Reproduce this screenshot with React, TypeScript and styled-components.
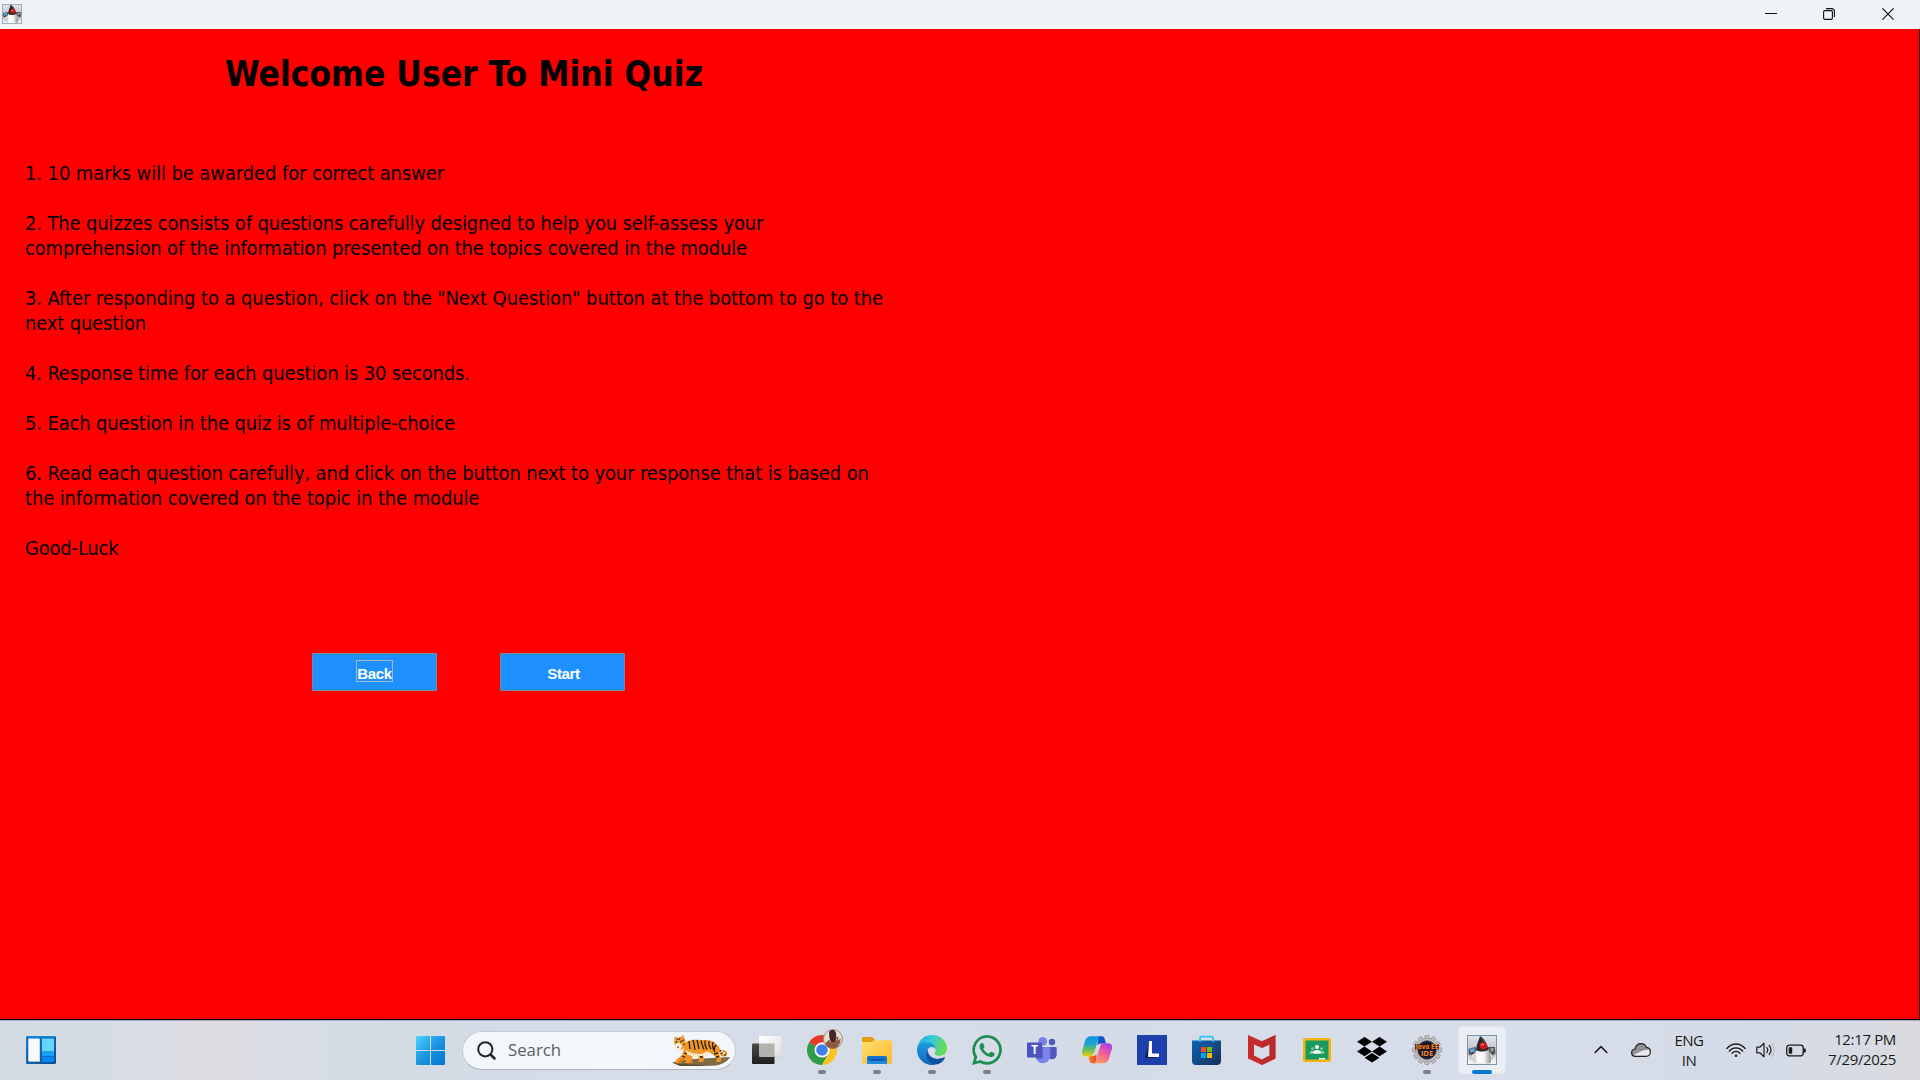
import React from "react";
import styled, { createGlobalStyle } from "styled-components";

const GlobalStyle = createGlobalStyle`
  * { box-sizing: border-box; }
  body { margin: 0; background: #ff0000; overflow: hidden; }
`;

const Desktop = styled.div`
  display: flex;
  flex-direction: column;
  width: 1920px;
  height: 1080px;
`;

/* ---------- window ---------- */

const TitleBar = styled.header`
  display: flex;
  align-items: center;
  justify-content: space-between;
  flex: 0 0 29px;
  padding: 0 3px 1px 2px;
  background: #eff3f8;
`;

const WindowControls = styled.div`
  display: flex;
`;

const WindowControl = styled.button`
  display: flex;
  align-items: center;
  justify-content: center;
  width: 58.5px;
  height: 28px;
  padding: 0;
  border: 0;
  background: none;
`;

const Frame = styled.main`
  display: flex;
  flex-direction: column;
  align-items: flex-start;
  flex: 0 0 990px;
  border-right: 1px solid #1a0000;
  background: #ff0000;
  color: #000;
`;

const Heading = styled.h1`
  margin: 24px 0 0 225px;
  height: 42px;
  font: bold 35px/42px "DejaVu Sans Condensed", Tahoma, sans-serif;
  letter-spacing: 0.03px;
  white-space: nowrap;
`;

const Rules = styled.div`
  display: flex;
  flex-direction: column;
  gap: 25px;
  margin: 66px 0 0 25px;
  font: 20px/25px "DejaVu Sans Condensed", Tahoma, sans-serif;
`;

const Rule = styled.p`
  margin: 0;
`;

const Line = styled.span<{ $tracking: number }>`
  display: block;
  white-space: nowrap;
  letter-spacing: ${(p) => p.$tracking}px;
`;

const Actions = styled.div`
  display: flex;
  gap: 63px;
  margin: 92px 0 0 312px;
`;

const ActionButton = styled.button`
  display: flex;
  align-items: center;
  justify-content: center;
  width: 125px;
  height: 38px;
  padding: 0 0 0 2px;
  border: 1px solid #7a8a99;
  background: #1e90ff;
  color: #fff;
  font: bold 15px/20px "Liberation Sans", Arial, sans-serif;
`;

const ButtonLabel = styled.span<{ $focused?: boolean }>`
  height: 22px;
  margin-top: ${(p) => (p.$focused ? "-2px" : "0")};
  margin-left: ${(p) => (p.$focused ? "-2px" : "0")};
  padding: ${(p) => (p.$focused ? "3px" : "2px")} 0 0;
  line-height: 20px;
  border: 1px solid ${(p) => (p.$focused ? "#a3b8cc" : "transparent")};
  letter-spacing: -0.35px;
`;

/* ---------- taskbar ---------- */

const Taskbar = styled.footer`
  display: flex;
  align-items: center;
  flex: 0 0 61px;
  border-top: 1px solid #000;
  box-shadow: inset 0 1px 0 #a5adb8;
  background: linear-gradient(90deg, #d4dbe5 0, #d5dce6 90px, #dedce2 220px, #d6dce6 330px, #d3dbe5 420px, #d6dde8 600px, #d5dce8 1100px, #d7dde9 1500px, #d5dbe6 1780px, #dadbe0 1920px);
  font-family: "Open Sans", "Segoe UI", sans-serif;
  color: #1b1b1b;
`;

const WidgetSlot = styled.div`
  display: flex;
  flex: 0 0 416px;
  padding-left: 26px;
`;

const SearchBox = styled.div`
  display: flex;
  align-items: center;
  width: 274px;
  height: 39px;
  margin: 0 3px 0 17px;
  padding: 0 5px 0 14px;
  border: 1px solid #c6ccd6;
  border-bottom-color: #aeb4be;
  border-radius: 20px;
  background: #f3f6fa;
`;

const SearchText = styled.span`
  flex: 1;
  margin-left: 12px;
  font-size: 16.8px;
  line-height: 24px;
  color: #5c5e62;
`;

const Apps = styled.div`
  display: flex;
`;

const AppSlot = styled.div`
  position: relative;
  display: flex;
  align-items: center;
  justify-content: center;
  width: 55px;
  height: 60px;
`;

const ActivePlate = styled.div`
  display: flex;
  align-items: center;
  justify-content: center;
  width: 48px;
  height: 48px;
  border: 1px solid #e3e7ef;
  border-radius: 5px;
  background: #ebeef5;
`;

const Indicator = styled.i<{ $active?: boolean }>`
  position: absolute;
  left: 50%;
  bottom: 6px;
  width: ${(p) => (p.$active ? 20 : 8)}px;
  height: 4px;
  border-radius: 2px;
  transform: translateX(-50%);
  background: ${(p) => (p.$active ? "#0078d4" : "#7c7f86")};
`;

const Tray = styled.div`
  display: flex;
  align-items: center;
  margin-left: auto;
  padding-right: 24px;
`;

const Language = styled.div`
  width: 34px;
  margin: 0 20px 0 21px;
  font-size: 15px;
  line-height: 20px;
  letter-spacing: -0.5px;
  text-align: center;
`;

const StatusIcons = styled.div`
  display: flex;
  align-items: center;
  gap: 10px;
`;

const Clock = styled.div`
  width: 70px;
  margin: -2px 0 0 20px;
  font-size: 15px;
  line-height: 20px;
  letter-spacing: -0.35px;
  text-align: right;
  white-space: nowrap;
`;

/* ---------- drawings ---------- */

const Svg = styled.svg`
  display: block;
  flex: none;
`;

const Duke = ({ size }: { size: number }) => (
  <Svg width={size} height={size} viewBox="0 0 30 30">
    <defs>
      <linearGradient id="dukeBg" x2="0" y2="1">
        <stop offset="0" stopColor="#dfe5ea" />
        <stop offset=".45" stopColor="#c3c9cd" />
        <stop offset=".6" stopColor="#9a9d9d" />
        <stop offset=".75" stopColor="#e1e1e0" />
        <stop offset="1" stopColor="#f5f6f7" />
      </linearGradient>
      <linearGradient id="dukeBody" x2="1">
        <stop offset="0" stopColor="#bfbfbd" />
        <stop offset=".25" stopColor="#fff" />
        <stop offset=".6" stopColor="#f4f4f2" />
        <stop offset="1" stopColor="#8f8f8d" />
      </linearGradient>
    </defs>
    <rect x=".5" y=".5" width="29" height="29" fill="url(#dukeBg)" stroke="#7796ad" />
    <path d="M1.500 14l7-2 1 6-7 2z" fill="#3d4145" />
    <path d="M2.500 14.500l5-1.500.6 3.500-5 1.300z" fill="#65a9da" />
    <path d="M21 12h7v6l-3 3-4-2z" fill="#4c4f52" />
    <path d="M23.500 13h3.500l-1 3.500h-2.500z" fill="#9b9fa2" />
    <path d="M9.500 16C7 19 3.500 20 3 23c1 2 4 1 6-1zM21 16c2 2 6 4 5 7-1 1-3 0-5-1z" fill="#dededc" stroke="#777" strokeWidth=".5" />
    <path d="M9.500 13C8.500 19 6 23 6.500 27c1.500 2.300 4 1.800 6-.5 2 1 4 1 5.500.5 1.500 2.300 4.500 2 6 .3.500-5-1-10-3-14.300z" fill="url(#dukeBody)" />
    <path d="M13 1.200C12 5 9.500 9 9 15c3.500 2.200 9 2 12.500-.5C20.500 9 17 3 13 1.200z" fill="#29292b" />
    <path d="M14 3c3 2 5 6 6 10" fill="none" stroke="#77777a" strokeWidth=".7" />
    <circle cx="16.300" cy="10.800" r="3.600" fill="#d4131d" />
    <ellipse cx="15.500" cy="9.600" rx="1.600" ry="1" fill="#f8736f" />
  </Svg>
);

const WidgetsIcon = () => (
  <Svg width="30" height="28" viewBox="0 0 30 28">
    <defs>
      <linearGradient id="wg" x2="1" y2="1">
        <stop offset="0" stopColor="#0a7fd6" />
        <stop offset="1" stopColor="#12498f" />
      </linearGradient>
    </defs>
    <rect width="30" height="28" rx="1.200" fill="url(#wg)" />
    <path d="M1 .7h28" stroke="#1d8ee0" />
    <rect x="2.300" y="2.500" width="11.500" height="23" rx="1" fill="#f8f8f9" />
    <rect x="3" y="25" width="11" height="1" fill="#9fb2c6" />
    <rect x="16" y="2.500" width="12" height="12.500" fill="#64d6fb" />
    <rect x="16" y="15" width="12" height="5" fill="#1b9df5" />
    <rect x="16" y="20.500" width="12" height="5.500" fill="#0685ec" />
  </Svg>
);

const StartIcon = () => (
  <Svg width="29" height="29" viewBox="0 0 29 29">
    <defs>
      <linearGradient id="st" x2="29" y2="29" gradientUnits="userSpaceOnUse">
        <stop offset="0" stopColor="#4ed3fd" />
        <stop offset=".5" stopColor="#1a94e0" />
        <stop offset="1" stopColor="#0074d4" />
      </linearGradient>
    </defs>
    <path d="M.8 0H14v14H0V.8zM15 0h13.200l.8.8V14H15zM0 15h14v14H.8l-.8-.8zM15 15h14v13.200l-.8.8H15z" fill="url(#st)" />
  </Svg>
);

const SearchIcon = () => (
  <Svg width="19" height="19" viewBox="0 0 19 19" fill="none" stroke="#252628" strokeLinecap="round">
    <circle cx="8.300" cy="8.300" r="7.100" strokeWidth="2" />
    <path d="M13.500 13.500l4 4" strokeWidth="2.500" />
  </Svg>
);

const Tiger = () => (
  <Svg width="58" height="33" viewBox="0 0 58 33">
    <path d="M0 28.500c8-2 14-3 22-3.500 12-.6 25-1.500 36-2-2 4-8 7.500-14 8.500H8z" fill="#7d6b45" />
    <path d="M0 28.500l8 3.500h36c-12-1-30-1-44-3.500z" fill="#5a4b30" />
    <path d="M46 13c2 5 3 9 6 8.500s2.500-4-.5-4.500" fill="none" stroke="#e58a1f" strokeWidth="1.900" strokeLinecap="round" />
    <path d="M13 17l-3 7-6 4 1 1.500h4l6-6zM24 19l-4 4 1 6.500h-4l1-8z" fill="#d9771b" />
    <path d="M14 8c6-3.500 12-2 18-2 7-.5 12 2 14.500 7 1.500 4 0 6 1 8l2 4-1 3h-4.500l1-3-4-4.500L36 18l-5 3 1 5-1 2h-5l1-2-1-5-6 1-1 5-1 2h-5l1-2-1-5-5 4-2 3H3l1-3 6-5 2-6z" fill="#ef9628" />
    <path d="M14 16c4 3 10 4 15 4l7-3-1 4-5 1-9 .5-6-2z" fill="#fbe6c4" />
    <path d="M2.500 4L3 2.500 6 4l3-.7L11 .5l1.500 3.500c1.500 3 2 7 0 10L9 16l-5-2-2-5z" fill="#f0992f" />
    <path d="M2.500 11l4-2.500 4 3-2 4-4.500-1z" fill="#fff0da" />
    <circle cx="4.500" cy="8" r="1" fill="#3b464b" />
    <circle cx="9" cy="7.500" r="1" fill="#3b464b" />
    <path d="M5 13l2 .3M5 4l1 2M8 3.500L7 6M12 6l-2 1M13 10l-2 1" stroke="#2e1d10" strokeWidth=".9" fill="none" />
    <path d="M17 7l1 8M21 6l1 4 1 6M25 6l1 4 1 5M29 6.500l1 4 2 5M33 6.500l0 4 2 5M37 7l0 4 2 4M41 8l-.5 3 1 5M44.500 11l-2 2 0 5M12 19l3 1M10 22l3 1M28 23h3M42 20l4-1M44 23l3-.5M48 17l1.500-.8M49.500 20l1-1.500M53.500 21.500l-.7-1.200" stroke="#2e1d10" strokeWidth="1.300" fill="none" />
  </Svg>
);

const TaskViewIcon = () => (
  <Svg width="30" height="30" viewBox="0 0 30 30">
    <defs>
      <linearGradient id="tvd" x2="0" y2="1">
        <stop offset="0" stopColor="#4a4b49" />
        <stop offset="1" stopColor="#1e1e1d" />
      </linearGradient>
      <linearGradient id="tvl" x2="1" y2="1">
        <stop offset="0" stopColor="#fff" />
        <stop offset="1" stopColor="#dededf" />
      </linearGradient>
    </defs>
    <rect x="0" y="8.500" width="22.500" height="20.500" rx="1" fill="url(#tvd)" />
    <rect x="7" y="1" width="22.500" height="20.500" rx="1" fill="url(#tvl)" />
    <path d="M7 8.500h15.500v13H7z" fill="#b1b1b1" />
    <path d="M8 21.200h21" stroke="#c5c7ca" strokeWidth=".7" />
  </Svg>
);

const ChromeIcon = () => (
  <Svg width="42" height="42" viewBox="-6 -6 42 42">
    <path d="M15 15L2 7.500A15 15 0 0 1 28 7.500H15z" fill="#e33b2e" />
    <path d="M15 15L2 7.500A15 15 0 0 0 15 30l6.500-11.200z" fill="#2f9c4b" />
    <path d="M15 7.500h13A15 15 0 0 1 15 30l6.500-11.200z" fill="#fcc31f" />
    <circle cx="15" cy="15" r="7.500" fill="#fff" />
    <circle cx="15" cy="15" r="5.800" fill="#3f7fee" />
    <circle cx="26" cy="4" r="9.500" fill="#e3e0cf" stroke="#8f8a80" strokeWidth=".9" />
    <path d="M18 9c1-2 3-3 5-2.500l5-.5c1.500-1 4-1 5.500.500C32 11 29.500 13.500 26 13.500c-4 0-6.500-2-8-4.500z" fill="#90583d" />
    <path d="M22-2c.5-4 6-4.500 7 0l.5 5-1.500 4h-4l-1.500-4z" fill="#4a2328" />
    <path d="M20.500 8l1.500-2.500M30 6l.8-3.500M32 7l1-2.500" stroke="#90583d" strokeWidth="1.500" fill="none" strokeLinecap="round" />
  </Svg>
);

const FolderIcon = () => (
  <Svg width="30" height="30" viewBox="0 0 30 30">
    <defs>
      <linearGradient id="fd" x2="1" y2="1">
        <stop offset="0" stopColor="#ffdf70" />
        <stop offset="1" stopColor="#fbb92a" />
      </linearGradient>
    </defs>
    <path d="M0 8V3.200C0 2.500.5 2 1.200 2h8.300c.8 0 1.200.2 1.700.8L13 5l-3 3z" fill="#dfa00e" />
    <path d="M0 7h9c1 0 1.500-.4 2-.9.500-.6 1-.9 2-.9h15.800c.7 0 1.200.5 1.200 1.200v21.400c0 .6-.5 1-1.200 1H1.200c-.7 0-1.200-.4-1.200-1z" fill="url(#fd)" />
    <path d="M5 28.800v-6c0-1 .8-1.800 1.800-1.800h16.400c1 0 1.800.8 1.800 1.800v6z" fill="#1173cd" />
    <path d="M5 26h20v2.800H5z" fill="#1e8be0" />
    <path d="M9 24.800h12" stroke="#0a4c97" strokeWidth="1.400" strokeLinecap="round" />
  </Svg>
);

const EdgeIcon = () => (
  <Svg width="30" height="30" viewBox="0 0 24 24">
    <defs>
      <linearGradient id="eg1" x1="0" x2="1" y2=".3">
        <stop offset="0" stopColor="#219fe0" />
        <stop offset=".5" stopColor="#36c7dd" />
        <stop offset="1" stopColor="#65db55" />
      </linearGradient>
      <linearGradient id="eg2" x2="0" y2="1">
        <stop offset="0" stopColor="#1b9de2" />
        <stop offset="1" stopColor="#1364ba" />
      </linearGradient>
    </defs>
    <path d="M.2 10.700C.9 4.300 6 0 12 0c6.800 0 12 5 12 10.800 0 3.600-2.800 5.900-6 5.900-2.600 0-4-1-4-1.900 0-.6 1-1 1-2.700 0-2-2.300-4.600-6.300-4.600C4 7.500 1.200 9 .2 10.700z" fill="url(#eg1)" />
    <path d="M0 12c0-3.600 3.500-6.200 8-6.200 4.200 0 7 2.800 7 6.300 0-1.800-1.600-2.600-3-2.600-3.500 0-5.500 4-3.500 8.500 1 2.400 3.200 4.900 6 5.700C7 25.300 0 19.500 0 12z" fill="url(#eg2)" />
    <path d="M8.900 11.500C6 14.500 7.500 21 13 23.300c4 1.200 8-1.800 9.300-4.900.2-.5-.2-.8-.7-.6-6 2.800-11.500-.1-12.500-3.300-.3-1-.4-2-.2-3z" fill="#10519b" />
  </Svg>
);

const WhatsAppIcon = () => (
  <Svg width="30" height="30" viewBox="0 0 24 24" fill="#1f8d52">
    <path d="M17.472 14.382c-.297-.149-1.758-.867-2.030-.967-.273-.099-.471-.148-.67.150-.197.297-.767.966-.940 1.164-.173.199-.347.223-.644.075-.297-.150-1.255-.463-2.390-1.475-.883-.788-1.480-1.761-1.653-2.059-.173-.297-.018-.458.130-.606.134-.133.298-.347.446-.520.149-.174.198-.298.298-.497.099-.198.050-.371-.025-.520-.075-.149-.669-1.612-.916-2.207-.242-.579-.487-.500-.669-.510-.173-.008-.371-.010-.570-.010-.198 0-.520.074-.792.372-.272.297-1.040 1.016-1.040 2.479 0 1.462 1.065 2.875 1.213 3.074.149.198 2.096 3.200 5.077 4.487.709.306 1.262.489 1.694.625.712.227 1.360.195 1.871.118.571-.085 1.758-.719 2.006-1.413.248-.694.248-1.289.173-1.413-.074-.124-.272-.198-.570-.347z" />
    <path fillRule="evenodd" d="M12.100 0A11.900 11.900 0 0 0 1.800 17.800L0 24l6.400-1.600A11.900 11.900 0 1 0 12.100 0zm0 2.300a9.600 9.600 0 1 1-5.300 17.600L3.200 21l1-3.600A9.600 9.600 0 0 1 12.100 2.300z" />
  </Svg>
);

const GlyphText = styled.text`
  font-family: "Open Sans", sans-serif;
  font-weight: 700;
`;

const TeamsIcon = () => (
  <Svg width="30" height="30" viewBox="0 0 30 30">
    <circle cx="25" cy="7" r="3.200" fill="#5059c0" />
    <path d="M20 12h8.500c.8 0 1.200.5 1.200 1.200V19c0 3.300-2 5.300-4.700 5.300-2.600 0-5-2-5-5z" fill="#5059c0" />
    <circle cx="15.700" cy="6.300" r="4.400" fill="#7b83eb" />
    <path d="M9 12h13c.8 0 1.300.5 1.300 1.300V20c0 5-3.300 8.200-7.600 8.200C11.500 28.200 9 25 9 21z" fill="#7b83eb" />
    <path d="M9 12h7v10.500c0 .8-.5 1.500-1.500 1.500H9z" fill="#5f67c8" />
    <rect x="0" y="7.500" width="15" height="15" rx="1.300" fill="#4b53bc" />
    <GlyphText x="7.500" y="19" fontSize="11.500" textAnchor="middle" fill="#fff">T</GlyphText>
  </Svg>
);

const CopilotIcon = () => (
  <Svg width="30" height="30" viewBox="0 0 30 30">
    <defs>
      <linearGradient id="cp1" x2="0" y2="1">
        <stop offset="0" stopColor="#1392e6" />
        <stop offset=".35" stopColor="#17a5d6" />
        <stop offset=".7" stopColor="#72bf55" />
        <stop offset="1" stopColor="#f2cf15" />
      </linearGradient>
      <linearGradient id="cp2" x1=".8" x2=".3" y2="1">
        <stop offset="0" stopColor="#a43be9" />
        <stop offset=".5" stopColor="#f0609a" />
        <stop offset="1" stopColor="#ff9a62" />
      </linearGradient>
      <linearGradient id="cp3" x2="1" y2="1">
        <stop offset="0" stopColor="#0b5bd0" />
        <stop offset="1" stopColor="#2247b4" />
      </linearGradient>
      <linearGradient id="cp4" x2="1">
        <stop offset="0" stopColor="#ff8b28" />
        <stop offset="1" stopColor="#e83f35" />
      </linearGradient>
    </defs>
    <path d="M16 1.200h4c1.700 0 2.300 1.200 2.700 2.700L24 8.500h-5c-2 0-3 .8-3.500 2.500z" fill="url(#cp3)" />
    <path d="M14 28.200h-4c-1.700 0-2.300-1.200-2.700-2.700L6.500 21H11c2 0 3-.8 3.500-2.500z" fill="url(#cp4)" />
    <path d="M9 1.200h9.500c-1.300.4-1.800 1.500-2.300 3L12 18c-.6 2.400-1.800 3.400-4 3.400H4c-3.500 0-4.800-2.500-3.800-6L3 6c1-3.200 2.800-4.800 6-4.800z" fill="url(#cp1)" />
    <path d="M21 28.200h-9.500c1.300-.4 1.800-1.500 2.300-3L18 11.700c.6-2.400 1.800-3.400 4-3.400h4c3.500 0 4.800 2.500 3.800 6L27 23.500c-1 3.200-2.800 4.700-6 4.700z" fill="url(#cp2)" />
  </Svg>
);

const LIcon = () => (
  <Svg width="30" height="30" viewBox="0 0 30 30">
    <rect width="30" height="30" fill="#1d3fae" />
    <path d="M12 6L8 23h13l-9-2z" fill="#0b2448" />
    <path d="M12 6h3v12.500h7V22H11z" fill="#fff" />
  </Svg>
);

const StoreIcon = () => (
  <Svg width="30" height="30" viewBox="0 0 30 30">
    <defs>
      <linearGradient id="ms" x2="1" y2="1">
        <stop offset="0" stopColor="#0a66b8" />
        <stop offset="1" stopColor="#1c2f56" />
      </linearGradient>
    </defs>
    <path d="M0 5.500h29V26c0 2.500-1.500 4-4 4H4c-2.500 0-4-1.500-4-4z" fill="url(#ms)" />
    <path d="M8 7V3c0-.8.500-1.300 1.300-1.300h10.400c.8 0 1.300.5 1.300 1.300v4" fill="none" stroke="#2cc4f4" strokeWidth="1.700" />
    <path d="M9 12h5v5H9z" fill="#f25022" />
    <path d="M15 12h5v5h-5z" fill="#7fba00" />
    <path d="M9 18h5v5H9z" fill="#00a4ef" />
    <path d="M15 18h5v5h-5z" fill="#ffb900" />
  </Svg>
);

const McAfeeIcon = () => (
  <Svg width="28" height="30" viewBox="0 0 28 30">
    <path fillRule="evenodd" d="M0 0l14 6.200L27.500 0v23.500L14 30 0 23.500zM6 9.500v11l8 4 7.500-4v-11L14 13z" fill="#c42d2c" />
    <path d="M14 6.200L27.500 0v23.500L14 30v-5.500l7.500-4v-11L14 13z" fill="#b02a2a" opacity=".55" />
  </Svg>
);

const ClassroomIcon = () => (
  <Svg width="28" height="24" viewBox="0 0 28 24">
    <rect width="28" height="24" rx="2" fill="#f3b211" />
    <rect x="2.500" y="2.500" width="23" height="19" fill="#189b5c" />
    <circle cx="14" cy="9" r="2" fill="#fff" />
    <circle cx="9.500" cy="10.500" r="1.300" fill="#8fd0b0" />
    <circle cx="18.500" cy="10.500" r="1.300" fill="#8fd0b0" />
    <path d="M6.500 15.500c0-2 1.500-2.700 3-2.700h9c1.500 0 3 .7 3 2.700z" fill="#8fd0b0" />
    <path d="M10 15.500c0-2.500 2-3.500 4-3.500s4 1 4 3.500z" fill="#fff" />
    <path d="M16 20h6v1.500h-6z" fill="#fff" />
  </Svg>
);

const DropboxIcon = () => (
  <Svg width="30" height="26" viewBox="0 0 30 26">
    <path d="M7.500 0L15 4.800 7.500 9.600 0 4.800zM22.500 0L30 4.800l-7.500 4.800L15 4.800zM7.500 9.600L15 14.400l-7.500 4.800L0 14.400zM22.500 9.600l7.500 4.800-7.500 4.800-7.500-4.800zM15 16l7.500 4.700L15 25.500l-7.500-4.800z" fill="#000" />
  </Svg>
);

const teeth = Array.from({ length: 12 }, (_, i) => i * 30);

const JavaEEIcon = () => (
  <Svg width="30" height="30" viewBox="0 0 30 30">
    {teeth.map((a) => (
      <rect key={a} x="12.800" y=".5" width="4.400" height="6" rx="1" fill="#bfc0bf" stroke="#777" strokeWidth=".5" transform={`rotate(${a} 15 15)`} />
    ))}
    <circle cx="15" cy="15" r="11.600" fill="#c5c6c5" stroke="#80807f" strokeWidth=".5" />
    <circle cx="15" cy="15" r="9.300" fill="#1d1832" stroke="#4b4753" strokeWidth=".8" />
    <path d="M3 9h24v5.500H3z" fill="#30180c" opacity=".8" />
    <GlyphText x="15" y="14" fontSize="6.500" textAnchor="middle" fill="#f0871f">Java EE</GlyphText>
    <GlyphText x="15" y="20.500" fontSize="7.500" textAnchor="middle" fill="#f0871f">IDE</GlyphText>
  </Svg>
);

const CloudIcon = () => (
  <Svg width="20" height="14" viewBox="0 0 20 14">
    <path d="M4.500 13.300C2 13.300.6 11.600.6 9.700c0-2 1.300-3.400 3.400-3.700C4.800 2.600 7 .7 10 .7c2.600 0 4.500 1.300 5.400 3.700 2.400.2 4 1.900 4 4.400 0 2.700-1.800 4.500-4.300 4.500z" fill="#8f9093" />
    <path d="M2 12.500c3-2 7-4 10-5 3-.8 5.500-1 7-.5.800 3.500-1 6.300-4 6.300H5z" fill="#e8e9eb" />
    <path d="M4.500 13.300C2 13.300.6 11.600.6 9.700c0-2 1.300-3.400 3.400-3.700C4.800 2.600 7 .7 10 .7c2.600 0 4.500 1.300 5.400 3.700 2.400.2 4 1.900 4 4.400 0 2.700-1.800 4.500-4.300 4.500z" fill="none" stroke="#222" strokeWidth="1.200" />
  </Svg>
);

const WifiIcon = () => (
  <Svg width="20" height="15" viewBox="0 0 20 15" fill="none" stroke="#1b1b1b" strokeWidth="1.300" strokeLinecap="round">
    <path d="M.8 5.500C5.900-.5 14.100-.5 19.200 5.500M3.300 8C7 3.700 13 3.700 16.700 8M5.900 10.400c2.300-2.700 5.900-2.700 8.200 0" />
    <circle cx="10" cy="12.800" r="1.300" fill="#1b1b1b" stroke="none" />
  </Svg>
);

const VolumeIcon = () => (
  <Svg width="20" height="16" viewBox="0 0 20 16" fill="none" stroke="#1b1b1b" strokeWidth="1.200" strokeLinecap="round" strokeLinejoin="round">
    <path d="M.8 5.200h3L8 1.300v13.400l-4.200-3.900h-3z" />
    <path d="M10.800 5.500c1.200 1.500 1.200 3.500 0 5M13.200 3.500c2.200 2.700 2.200 6.300 0 9" />
    <path d="M15.800 1.700c3.200 3.800 3.200 8.800 0 12.600" stroke="#b1b6bf" />
  </Svg>
);

const BatteryIcon = () => (
  <Svg width="20" height="13" viewBox="0 0 20 13">
    <rect x=".7" y="1.200" width="16.500" height="10.600" rx="2.500" fill="none" stroke="#1b1b1b" strokeWidth="1.300" />
    <rect x="2.700" y="3.200" width="3.500" height="6.600" rx=".7" fill="#1b1b1b" />
    <path d="M17.500 4.500h1.300c.6 0 1 .4 1 1v2c0 .6-.4 1-1 1h-1.300z" fill="#1b1b1b" />
  </Svg>
);

const ChevronIcon = () => (
  <Svg width="14" height="9" viewBox="0 0 14 9">
    <path d="M1.200 7.500L7 1.700l5.800 5.800" fill="none" stroke="#1b1b1b" strokeWidth="1.600" strokeLinecap="round" />
  </Svg>
);

const MoreButton = styled.div`
  margin: -1px 23px 0 0;
`;

/* ---------- content ---------- */

type TextLine = [text: string, tracking: number];

const rules: TextLine[][] = [
  [["1. 10 marks will be awarded for correct answer", -0.11]],
  [
    ["2. The quizzes consists of questions carefully designed to help you self-assess your", -0.14],
    ["comprehension of the information presented on the topics covered in the module", -0.155],
  ],
  [
    ['3. After responding to a question, click on the "Next Question" button at the bottom to go to the', -0.095],
    ["next question", -0.18],
  ],
  [["4. Response time for each question is 30 seconds.", -0.15]],
  [["5. Each question in the quiz is of multiple-choice", -0.15]],
  [
    ["6. Read each question carefully, and click on the button next to your response that is based on", -0.135],
    ["the information covered on the topic in the module", -0.13],
  ],
  [["Good-Luck", -0.2]],
];

const apps: { name: string; Icon: () => React.JSX.Element; running?: boolean }[] = [
  { name: "task-view", Icon: TaskViewIcon },
  { name: "chrome", Icon: ChromeIcon, running: true },
  { name: "explorer", Icon: FolderIcon, running: true },
  { name: "edge", Icon: EdgeIcon, running: true },
  { name: "whatsapp", Icon: WhatsAppIcon, running: true },
  { name: "teams", Icon: TeamsIcon },
  { name: "copilot", Icon: CopilotIcon },
  { name: "l", Icon: LIcon },
  { name: "store", Icon: StoreIcon },
  { name: "mcafee", Icon: McAfeeIcon },
  { name: "classroom", Icon: ClassroomIcon },
  { name: "dropbox", Icon: DropboxIcon },
  { name: "java-ee", Icon: JavaEEIcon, running: true },
];

export default function App() {
  return (
    <Desktop>
      <GlobalStyle />
      <TitleBar>
        <Duke size={20} />
        <WindowControls>
          <WindowControl>
            <Svg width="12" height="12" viewBox="0 0 12 12">
              <path d="M0 5.500h12" stroke="#111" />
            </Svg>
          </WindowControl>
          <WindowControl>
            <Svg width="12" height="12" viewBox="0 0 12 12" fill="none" stroke="#111" strokeWidth="1.100">
              <rect x=".6" y="2.600" width="8.800" height="8.800" rx="1.300" />
              <path d="M3 .6h5.400c1.800 0 3 1.200 3 3V9" />
            </Svg>
          </WindowControl>
          <WindowControl>
            <Svg width="12" height="12" viewBox="0 0 12 12">
              <path d="M.4.4l11.200 11.200M11.600.4L.4 11.600" stroke="#111" strokeWidth="1.200" />
            </Svg>
          </WindowControl>
        </WindowControls>
      </TitleBar>

      <Frame>
        <Heading>Welcome User To Mini Quiz</Heading>
        <Rules>
          {rules.map((lines) => (
            <Rule key={lines[0][0]}>
              {lines.map(([text, tracking]) => (
                <Line key={text} $tracking={tracking}>
                  {text}
                </Line>
              ))}
            </Rule>
          ))}
        </Rules>
        <Actions>
          <ActionButton>
            <ButtonLabel $focused>Back</ButtonLabel>
          </ActionButton>
          <ActionButton>
            <ButtonLabel>Start</ButtonLabel>
          </ActionButton>
        </Actions>
      </Frame>

      <Taskbar>
        <WidgetSlot>
          <WidgetsIcon />
        </WidgetSlot>
        <StartIcon />
        <SearchBox>
          <SearchIcon />
          <SearchText>Search</SearchText>
          <Tiger />
        </SearchBox>
        <Apps>
          {apps.map(({ name, Icon, running }) => (
            <AppSlot key={name}>
              <Icon />
              {running && <Indicator />}
            </AppSlot>
          ))}
          <AppSlot>
            <ActivePlate>
              <Duke size={30} />
            </ActivePlate>
            <Indicator $active />
          </AppSlot>
        </Apps>
        <Tray>
          <MoreButton>
            <ChevronIcon />
          </MoreButton>
          <CloudIcon />
          <Language>
            ENG
            <br />
            IN
          </Language>
          <StatusIcons>
            <WifiIcon />
            <VolumeIcon />
            <BatteryIcon />
          </StatusIcons>
          <Clock>
            12:17 PM
            <br />
            7/29/2025
          </Clock>
        </Tray>
      </Taskbar>
    </Desktop>
  );
}
